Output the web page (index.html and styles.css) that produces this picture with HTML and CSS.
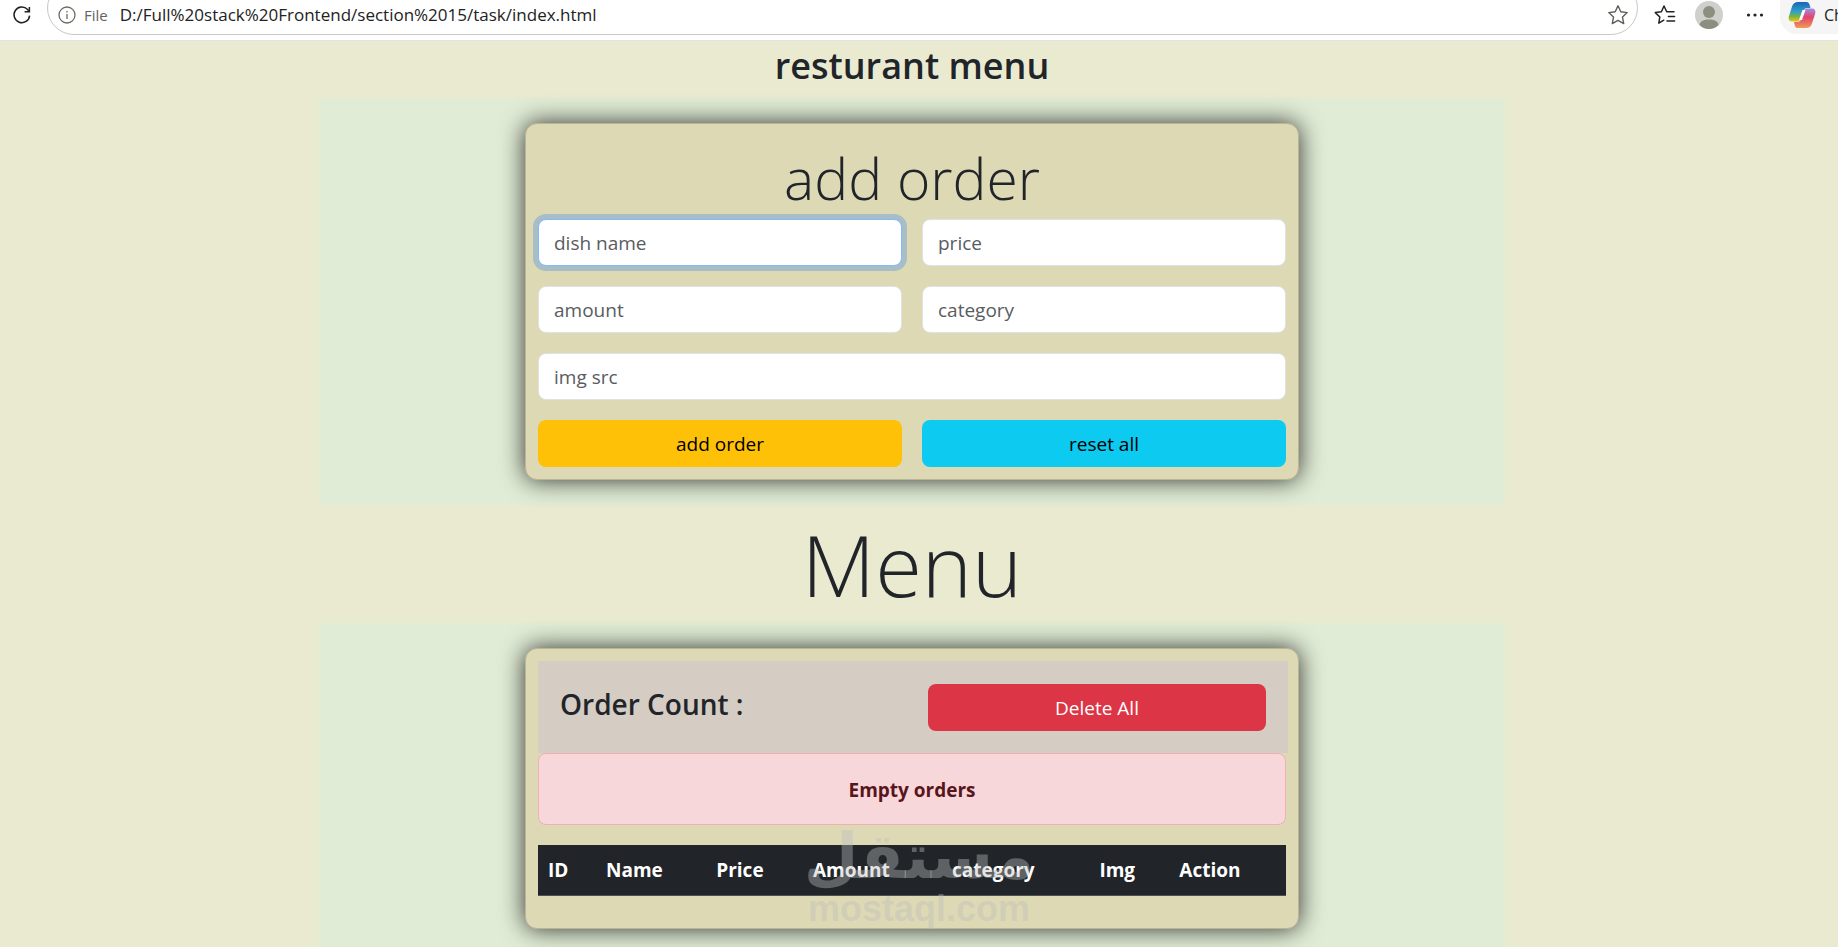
FILE: index.html
```html
<!DOCTYPE html>
<html lang="en">
<head>
  <meta charset="UTF-8">
  <meta name="viewport" content="width=device-width, initial-scale=1.0">
  <title>resturant menu</title>
  <link rel="stylesheet" href="styles.css">
</head>
<body>
  <!-- Browser toolbar -->
  <header class="toolbar">
    <button class="tool-button" aria-label="Refresh">
      <svg width="20" height="20" viewBox="0 0 20 20" fill="none" stroke="#222" stroke-width="1.5"><path d="M17.600 10.600A7.800 7.800 0 1 1 15.600 4.600L17.200 6.500"/><path d="M17.400 2v4.800h-4.800"/></svg>
    </button>
    <div class="address-bar">
      <svg width="18" height="18" viewBox="0 0 18 18" fill="none" stroke="#6b6b62" stroke-width="1.3"><circle cx="9" cy="9" r="8"/><path d="M9 8v5M9 5v1.6"/></svg>
      <span class="scheme">File</span>
      <input class="url" aria-label="Address" value="D:/Full%20stack%20Frontend/section%2015/task/index.html">
      <button class="tool-button" aria-label="Add to favorites">
        <svg width="22" height="22" viewBox="0 0 22 22" fill="none" stroke="#5f5f55" stroke-width="1.4" stroke-linejoin="round"><path d="M11 1.8l2.8 6 6.4.8-4.7 4.5 1.2 6.5L11 16.4l-5.7 3.2 1.2-6.5L1.8 8.6l6.400-.8z"/></svg>
      </button>
    </div>
    <button class="tool-button favorites" aria-label="Favorites">
      <svg width="22" height="22" viewBox="0 0 22 22" fill="none" stroke="#222" stroke-width="1.5" stroke-linejoin="round" stroke-linecap="round"><path d="M9.800 16.200l-5 3 1-6.200L1.300 8.600l6.100-.9L10 2l2.700 5.700H20M14.400 12.400H20.600M13 17H20.600"/></svg>
    </button>
    <button class="tool-button profile" aria-label="Profile">
      <svg width="28" height="28" viewBox="0 0 28 28"><circle cx="14" cy="14" r="14" fill="#cfcfcb"/><circle cx="14" cy="11" r="6" fill="#8b8f80"/><path d="M4.500 24C5 20 9 18.500 14 18.500s9 1.500 9.500 5.500A14 14 0 0 1 14 28a14 14 0 0 1-9.500-4z" fill="#8b8f80"/></svg>
    </button>
    <button class="tool-button more" aria-label="Settings and more">
      <svg width="18" height="18" viewBox="0 0 18 18" fill="#222"><circle cx="2.500" cy="9" r="1.600"/><circle cx="9" cy="9" r="1.600"/><circle cx="15.500" cy="9" r="1.600"/></svg>
    </button>
    <button class="copilot">
      <svg width="28" height="28" viewBox="0 0 28 28">
        <defs>
          <linearGradient id="cool" x1="0" y1="0" x2="0" y2="1"><stop offset="0" stop-color="#1b62b8"/><stop offset=".5" stop-color="#2fa3c8"/><stop offset=".75" stop-color="#7fb53c"/><stop offset="1" stop-color="#f2c11c"/></linearGradient>
          <linearGradient id="warm" x1="0" y1="0" x2="0" y2="1"><stop offset="0" stop-color="#a58be8"/><stop offset=".45" stop-color="#e2456b"/><stop offset="1" stop-color="#f09a55"/></linearGradient>
        </defs>
        <path d="M10 1h8c3 0 3.500 2 4.500 6h-3c-3 0-4 2-5 5l-2 6c-.8 2-2 2.500-4 2.500H4C1 20.500 0 18 1 15l3-9.500C5 2.500 7 1 10 1z" fill="url(#cool)"/>
        <path d="M18 27h-8c-3 0-3-2-4-6h3c3 0 4-2 5-5l2-6c.8-2 2-2.500 4-2.500h4c3 0 4 2.500 3 5.500l-3 9.500c-1 3-3 4.500-6 4.500z" fill="url(#warm)"/>
        <path d="M11 19l3.500-10h3L14 19z" fill="#fff"/>
      </svg>
      <span>Chat</span>
    </button>
  </header>

  <main class="page">
    <h1 class="title">resturant menu</h1>

    <!-- Order form -->
    <section class="section">
      <form class="card" onsubmit="return false">
        <h2 class="form-title">add order</h2>
        <div class="form-grid">
          <input class="field" aria-label="dish name" placeholder="dish name" autofocus>
          <input class="field" aria-label="price" placeholder="price">
          <input class="field" aria-label="amount" placeholder="amount">
          <input class="field" aria-label="category" placeholder="category">
          <input class="field wide" aria-label="img src" placeholder="img src">
          <button class="btn btn-warning" type="submit">add order</button>
          <button class="btn btn-info" type="reset">reset all</button>
        </div>
      </form>
    </section>

    <h2 class="menu-title">Menu</h2>

    <!-- Orders -->
    <section class="section">
      <div class="card">
        <div class="count-bar">
          <h3>Order Count : <span id="count"></span></h3>
          <button class="btn btn-danger">Delete All</button>
        </div>
        <div class="alert">Empty orders</div>
        <table class="orders">
          <thead>
            <tr>
              <th>ID</th>
              <th>Name</th>
              <th>Price</th>
              <th>Amount</th>
              <th>category</th>
              <th>Img</th>
              <th>Action</th>
            </tr>
          </thead>
          <tbody></tbody>
        </table>
      </div>
    </section>
  </main>

  <div class="watermark">
    <span class="watermark-ar" lang="ar" dir="rtl">مستقل</span>
    <span class="watermark-en">mostaql.com</span>
  </div>
</body>
</html>
```
FILE: styles.css
```css
/* ====== Base layout ====== */
*{box-sizing:border-box}
body{
  margin:0;
  height:100vh;
  display:flex;
  flex-direction:column;
  overflow:hidden;
  position:relative;
  background:#eaead1;
  color:#212529;
  font-family:"Segoe UI","Open Sans","Noto Sans",sans-serif;
  font-size:19px;
  line-height:30px;
}
h1,h2,h3{margin:0}
button,input{font:inherit;color:inherit}
button{cursor:pointer}

/* ====== Browser toolbar ====== */
.toolbar{
  flex:none;
  display:flex;
  align-items:flex-start;
  height:41px;
  background:#fff;
  border-bottom:1px solid #e2e2e6;
  overflow:hidden;
}
.tool-button{display:flex;align-items:center;height:30px;padding:0;border:0;background:none}
.toolbar > .tool-button:first-child{margin:0 15px 0 12px}
.address-bar{
  flex:1;
  display:flex;
  align-items:center;
  height:54px;
  margin-top:-19px;
  padding:14px 8px 0 10px;
  border:1px solid #c8c8c8;
  border-radius:27px;
}
.scheme{margin:0 12px 0 8px;font-size:15px;color:#63635c}
.url{flex:1;min-width:0;padding:0;border:0;outline:0;background:none;font-size:17px;color:#222}
.favorites{margin-left:16px}
.profile{margin-left:19px}
.more{margin-left:23px}
.copilot{
  display:flex;
  align-items:center;
  gap:8px;
  width:58px;
  height:34px;
  margin-left:16px;
  padding:0 0 4px 8px;
  border:0;
  border-radius:0 0 0 17px;
  background:#f5f5f5;
  font-size:16px;
  overflow:hidden;
}
.copilot svg{flex:none}

/* ====== Page ====== */
.page{flex:1;min-height:0;overflow:hidden;padding-right:14px;text-align:center}
.title{padding:3px 0 11px;font-size:36px;font-weight:600;line-height:43px}
.section{width:65%;margin:0 auto;padding:25px 0;background:#e0ecd5}
.card{
  width:100%;
  max-width:774px;
  margin:0 auto;
  padding:12px;
  border:1px solid #b9b596;
  border-radius:12px;
  background:#ddd9b5;
  box-shadow:0 0 25px rgba(0,0,0,.8);
}
.form-title{padding:6px 0 4px;font-size:57px;font-weight:300;line-height:73px}
.form-grid{display:grid;grid-template-columns:1fr 1fr;gap:20px}
.wide{grid-column:1 / -1}
.menu-title{padding:5px 0;font-size:85px;font-weight:300;line-height:108px}

/* ====== Fields & buttons ====== */
.field{
  width:100%;
  height:47px;
  padding:0 15px;
  border:1px solid #dee2e6;
  border-radius:8px;
  background:#fff;
}
.field::placeholder{color:#595c5f;opacity:1}
.field:focus{
  border-color:#86b7fe;
  outline:0;
  box-shadow:0 0 0 5px rgba(13,110,253,.25);
  caret-color:transparent;
}
.btn{height:47px;padding:0 15px;border:0;border-radius:8px}
.btn-warning{background:#ffc107;color:#000}
.btn-info{background:#0dcaf0;color:#000}
.btn-danger{width:338px;background:#dc3545;color:#fff}

/* ====== Orders ====== */
.count-bar{
  display:flex;
  justify-content:space-between;
  margin-right:-2px;
  padding:23px 22px 22px;
  background:#d5ccc3;
}
.count-bar h3{font-size:28px;font-weight:600;line-height:40px}
.alert{
  padding:21px 20px 19px;
  border:1px solid #f1aeb5;
  border-radius:8px;
  background:#f8d7da;
  color:#58151c;
  font-weight:700;
}
.orders{width:100%;margin:20px 0;border-collapse:collapse;text-align:left}
.orders th{
  padding:10px;
  border-bottom:1px solid #4d5154;
  background:#212529;
  color:#fff;
  font-weight:700;
}

/* ====== Watermark ====== */
.watermark{
  position:absolute;
  left:0;
  right:0;
  bottom:18px;
  display:flex;
  flex-direction:column;
  align-items:center;
  color:rgba(190,190,190,.4);
  font-weight:700;
  pointer-events:none;
}
.watermark-ar{font-family:"DejaVu Sans",sans-serif;font-size:63px;line-height:64px}
.watermark-en{font-family:"Liberation Sans",Arial,sans-serif;font-size:36px;line-height:40px}
```
